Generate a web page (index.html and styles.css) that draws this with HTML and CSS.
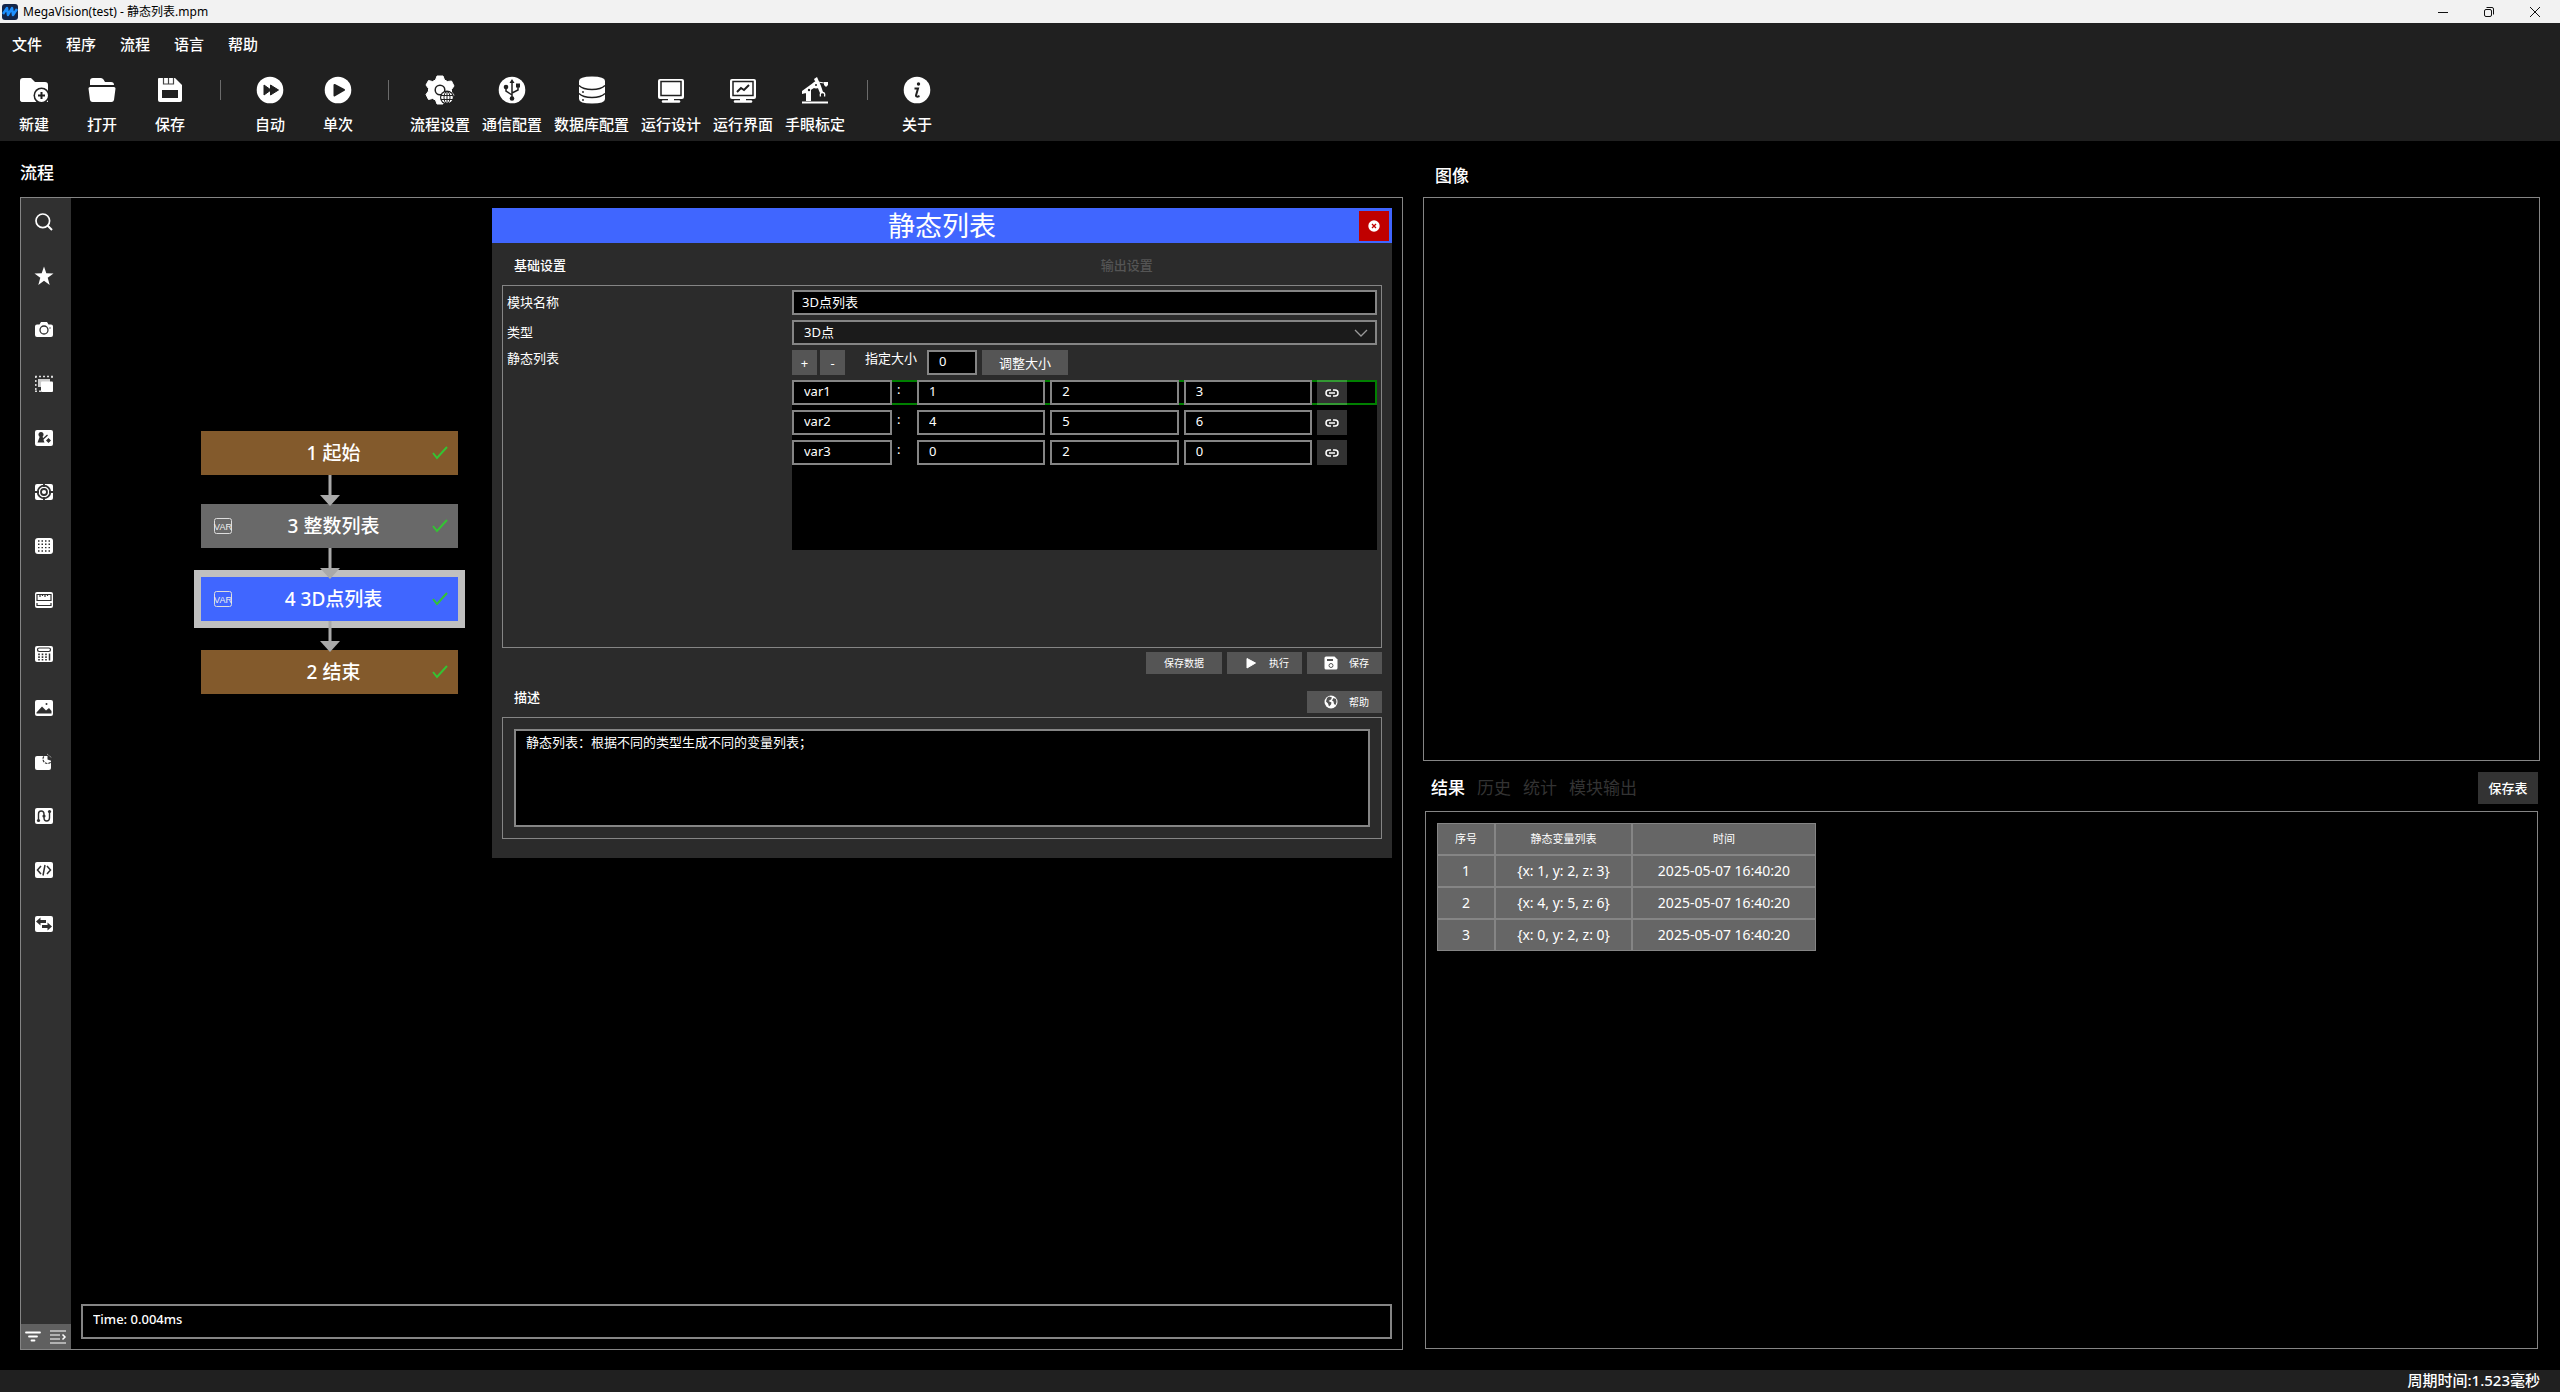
FILE: index.html
```html
<!DOCTYPE html>
<html lang="zh-CN">
  <head>
    <meta charset="utf-8">
    <meta name="viewport" content="width=device-width, initial-scale=1">
    <title>MegaVision(test) - 静态列表.mpm</title>
    <link rel="stylesheet" href="styles.css">
  </head>
  <body>
    <div class="titlebar">
      <svg class="applogo" viewBox="0 0 16 16"><rect width="16" height="16" rx="3" fill="#14264a"/><path d="M1 10l4-6 1 7 4-7 1 7 4-6" fill="none" stroke="#1e90ff" stroke-width="2.500" stroke-linejoin="round"/></svg>
      <span class="apptitle">MegaVision(test) - 静态列表.mpm</span>
      <button class="winbtn" aria-label="最小化"><svg viewBox="0 0 10 10"><path d="M0 5.500h10" stroke="#111"/></svg></button>
      <button class="winbtn" aria-label="还原"><svg viewBox="0 0 10 10" fill="none" stroke="#111"><rect class="hollow" x=".5" y="2.500" width="7" height="7" rx="1.500"/><path class="hollow" d="M2.500.500H8A1.500 1.500 0 0 1 9.500 2v5.500"/></svg></button>
      <button class="winbtn" aria-label="关闭"><svg viewBox="0 0 10 10"><path d="M0 0l10 10M10 0L0 10" stroke="#111"/></svg></button>
    </div>

    <header>
      <nav class="menu">
        <a href="#">文件</a>
        <a href="#">程序</a>
        <a href="#">流程</a>
        <a href="#">语言</a>
        <a href="#">帮助</a>
      </nav>
      <div class="toolbar">
        <button class="tool">
          <svg viewBox="0 0 28 28"><path d="M3 2h8l4 4h10q3 0 3 3v9H3v8q-3 0-3-3V5q0-3 3-3z"/><path d="M0 16h28v10H3q-3 0-3-3z"/><circle cx="21.500" cy="19.500" r="8" fill="#202020"/><circle cx="21.500" cy="19.500" r="6.500"/><path d="M21.500 16v7M18 19.500h7" stroke="#202020" stroke-width="2"/></svg>
          新建
        </button>
        <button class="tool">
          <svg viewBox="0 0 28 28"><path d="M2 9V5q0-3 3-3h8q1.500 0 2.500 1.500L17 6h6q3 0 3 3zM2 11h24q1.500 0 1.500 1.500L26 24q-.5 2-2.500 2h-19Q2.500 26 2 24L.500 12.500Q.500 11 2 11z"/></svg>
          打开
        </button>
        <button class="tool">
          <svg viewBox="0 0 28 28"><path d="M3 2h16l7 7v15q0 2-2 2H4q-2 0-2-2V3q0-1 1-1z"/><path d="M7.500 2v6h10V2M12.500 2v6" fill="none" stroke="#444" stroke-width="1.200"/><path d="M6 14h16v8H6z" fill="#202020"/></svg>
          保存
        </button>
        <span class="sep"></span>
        <button class="tool">
          <svg viewBox="0 0 28 28"><circle cx="14" cy="14" r="13.300"/><path d="M8 9l7 5-7 5zM14.500 9l8 5-8 5z" fill="#202020" stroke="#202020" stroke-linejoin="round"/></svg>
          自动
        </button>
        <button class="tool">
          <svg viewBox="0 0 28 28"><circle cx="14" cy="14" r="13.300"/><path d="M10.500 9l9.500 5-9.500 5.500z" fill="#202020" stroke="#202020" stroke-width="2" stroke-linejoin="round"/></svg>
          单次
        </button>
        <span class="sep"></span>
        <button class="tool">
          <svg viewBox="0 0 28 28"><path d="M11 0h6l1.500 4 3 1.500 4-.5 2.500 5-2.500 3.500V16l2.500 3-3 5-4-1-3 1.500L17 28h-6l-1.500-4-3-1.500-4 1L0 18.500 2.500 15v-2.500L0 9l2.500-4.500 4 1L9.500 4z" stroke="#fff" stroke-linejoin="round"/><circle cx="14" cy="14" r="4.800" fill="none" stroke="#202020" stroke-width="1.500"/><circle cx="21" cy="21.500" r="7" fill="#202020"/><circle cx="21" cy="21.500" r="5.800"/><path d="M21 15v13M15 19.500h12M15 23.500h12" stroke="#202020"/><ellipse cx="21" cy="21.500" rx="3" ry="6" fill="none" stroke="#202020"/></svg>
          流程设置
        </button>
        <button class="tool">
          <svg viewBox="0 0 28 28"><circle cx="14" cy="14" r="13.300"/><g fill="none" stroke="#202020" stroke-width="1.500"><path d="M14 23V5M14 19l-6-4v-4M14 17l6-3v-4"/></g><g fill="#202020"><path d="M11.500 7L14 3l2.500 4zM18 7.500h4v4h-4z"/><circle cx="8" cy="11" r="2.300"/><circle cx="14" cy="22.500" r="2.300"/></g></svg>
          通信配置
        </button>
        <button class="tool">
          <svg viewBox="0 0 28 28"><path d="M1 5q0-4.500 13-4.500T27 5v18q0 4.500-13 4.500T1 23z"/><path d="M1 9.500q4 4 13 4t13-4M1 17.500q4 4 13 4t13-4" fill="none" stroke="#202020" stroke-width="1.500"/><circle cx="5" cy="16" r=".9" fill="#202020"/><circle cx="5" cy="24" r=".9" fill="#202020"/></svg>
          数据库配置
        </button>
        <button class="tool">
          <svg viewBox="0 0 28 28"><rect x="1" y="3" width="26" height="20" rx="2"/><rect x="4" y="5.500" width="20" height="14" stroke="#202020" stroke-width="1.500"/><path d="M6 25.500h16" stroke="#fff" stroke-width="2.500" stroke-linecap="round"/><path d="M11 22h6v4h-6z"/></svg>
          运行设计
        </button>
        <button class="tool">
          <svg viewBox="0 0 28 28"><rect x="1" y="3" width="26" height="20" rx="2"/><rect x="4" y="5.500" width="20" height="14" stroke="#202020" stroke-width="1.500"/><path d="M8 16l4-4 3 2 5-5" fill="none" stroke="#202020" stroke-width="2"/><path d="M6 25.500h16" stroke="#fff" stroke-width="2.500" stroke-linecap="round"/><path d="M11 22h6v4h-6z"/></svg>
          运行界面
        </button>
        <button class="tool">
          <svg viewBox="0 0 28 28"><path d="M1 26.500h26" stroke="#fff" stroke-width="2"/><path d="M5 25V13h5v12zM1 15l11-8 4 2-3 3-8 5-4 1z"/><circle cx="15" cy="9" r="3.500"/><path d="M13 3l3-2 4 9 2 6-3 1z"/><path d="M19.500 20.500q-1-4 2-4t2 4" fill="none" stroke="#fff" stroke-width="1.300"/><path d="M17 6l6 1" stroke="#fff"/><path d="M23 6h4v3l-2 2-2-2z"/><circle cx="8" cy="14" r="1.200" fill="#202020"/><circle cx="15" cy="9" r="1" fill="#202020"/></svg>
          手眼标定
        </button>
        <span class="sep"></span>
        <button class="tool">
          <svg viewBox="0 0 28 28"><circle cx="14" cy="14" r="13.300"/><circle cx="15.500" cy="8" r="1.700" fill="#202020"/><path d="M11.500 12.500h3.500l-2 7q0 2 3.500.5" fill="none" stroke="#202020" stroke-width="2"/></svg>
          关于
        </button>
      </div>
    </header>

    <main>
      <section class="flow">
        <h2 class="caption">流程</h2>
        <div class="flowbox">
          <aside>
            <div class="palette">
              <button aria-label="搜索"><svg viewBox="0 0 18 18"><circle cx="7.800" cy="7.800" r="6.800" fill="none" stroke="#fff" stroke-width="1.700"/><path d="M12.500 12.500l4.500 4.500" stroke="#fff" stroke-width="2"/></svg></button>
              <button aria-label="收藏"><svg viewBox="0 0 18 18"><path d="M9-.5l2.300 6.800 7.200.2-5.800 4.200 2 7.300L9 13.700 3.300 18l2-7.300-5.800-4.200 7.200-.2z"/></svg></button>
              <button aria-label="相机"><svg viewBox="0 0 18 18"><path d="M6 1h6l1.500 2.500H16q2 0 2 2V14q0 2-2 2H2q-2 0-2-2V5.500q0-2 2-2h2.500z"/><circle cx="9" cy="9" r="4" fill="none" stroke="#303030" stroke-width="1.300"/><circle cx="15" cy="7" r=".7" fill="#303030"/></svg></button>
              <button aria-label="区域"><svg viewBox="0 0 18 18"><path d="M0 1.500h18M.8 1v15M0 16.200h6M17 1v4" fill="none" stroke="#ddd" stroke-width="1.500" stroke-dasharray="2 2"/><path d="M3 4h12v8H3z" fill="#ccc"/><rect x="6" y="6.500" width="12" height="10.500" rx="1"/></svg></button>
              <button aria-label="定位"><svg viewBox="0 0 18 18"><rect y="1" width="18" height="16" rx="2"/><g fill="#303030"><circle cx="6" cy="5.500" r="2.500"/><path d="M5 7h2l2.500 6.500H2.500zM13.500 9l2.500 2.500-2.500 2.500-2.500-2.500z"/></g><path d="M7 11l5.500-5M6 6l2 5" stroke="#303030" stroke-width="1.300"/></svg></button>
              <button aria-label="标定"><svg viewBox="0 0 18 18"><rect y="1" width="18" height="16" rx="2"/><g fill="none" stroke="#303030" stroke-width="1.800"><circle cx="9" cy="9" r="6.300"/><circle cx="9" cy="9" r="3"/><path d="M9 1v3M9 14v3M0 9h4M14 9h4"/></g></svg></button>
              <button aria-label="点阵"><svg viewBox="0 0 18 18"><rect y="1" width="18" height="16" rx="3"/><path d="M3 4h12M3 7.300h12M3 10.600h12M3 14h12" stroke="#303030" stroke-width="1.400" stroke-dasharray="1.500 2"/></svg></button>
              <button aria-label="测量"><svg viewBox="0 0 18 18"><rect y="1" width="18" height="16" rx="2"/><path d="M2 3.500h14v6H2zM2 12v2.500h14V12M5 3v3M7.500 3v2M10 3v3M12.500 3v2" fill="none" stroke="#303030" stroke-width="1.200"/></svg></button>
              <button aria-label="计算"><svg viewBox="0 0 18 18"><rect y="1" width="18" height="16" rx="2"/><rect x="2.500" y="3" width="13" height="3.500" rx="1.700" fill="none" stroke="#303030" stroke-width="1.200"/><path d="M4 8.500v7M7.500 8.500v7M11 8.500v7" stroke="#303030" stroke-width="1.600" stroke-dasharray="1.800 1"/><path d="M14.500 8.500v7" stroke="#303030" stroke-width="1.500"/></svg></button>
              <button aria-label="图像"><svg viewBox="0 0 18 18"><rect y="1" width="18" height="16" rx="2"/><path d="M1.500 13.500L7 7.500l4 4 3-2.500 2.500 3v2.500h-15z" fill="#303030"/><circle cx="11.500" cy="5" r="1" fill="#303030"/></svg></button>
              <button aria-label="图形"><svg viewBox="0 0 18 18"><rect y="3" width="16" height="14" rx="2"/><path d="M12.500 6.500V1.500A5 5 0 0 1 17 8z" fill="#303030"/><circle cx="12.500" cy="6" r="4.500" fill="none" stroke="#303030" stroke-width="1.200" stroke-dasharray="2.500 1"/><path d="M12 1l5 4" stroke="#999" stroke-dasharray="2 1"/></svg></button>
              <button aria-label="路径"><svg viewBox="0 0 18 18"><rect y="1" width="18" height="16" rx="2"/><path d="M3.500 13V7q0-3 2.700-3T9 7v4q0 3 2.700 3t2.800-3V5" fill="none" stroke="#303030" stroke-width="1.400"/><g fill="#303030"><circle cx="3.500" cy="13.500" r="1.600"/><circle cx="9" cy="9" r="1.600"/><circle cx="14.500" cy="4.500" r="1.600"/></g></svg></button>
              <button aria-label="脚本"><svg viewBox="0 0 18 18"><rect y="1" width="18" height="16" rx="2"/><path d="M6 5L2.500 9 6 13M12 5l3.500 4-3.500 4M10 4L8 14.500" fill="none" stroke="#303030" stroke-width="1.500"/></svg></button>
              <button aria-label="通信"><svg viewBox="0 0 18 18"><rect y="1" width="18" height="16" rx="2"/><path d="M1 6.500L5.500 2.500V5H11v3H5.500v2.500zM17 11.500l-4.500-4V10H7v3h5.500v2.500z" fill="#303030"/></svg></button>
            </div>
            <div class="palettefoot">
              <button aria-label="筛选"><svg viewBox="0 0 16 14"><path d="M1 2.500h14M4 6.500h8M6.500 10.500h3" stroke="#fff" stroke-width="1.800" stroke-linecap="round"/></svg></button>
              <button aria-label="展开"><svg viewBox="0 0 16 14"><path d="M0 1h16M0 5h10M0 9h10M0 13h16" stroke="#ccc" stroke-width="1.500"/><path d="M12.500 4.500L15 7l-2.500 2.500" fill="none" stroke="#fff" stroke-width="1.500"/></svg></button>
            </div>
          </aside>

          <div class="canvas">
            <div class="graph">
              <div class="node edge">
                <span>1 起始</span>
                <svg class="check" viewBox="0 0 16 14"><path d="M1 7l4 5L15 1"/></svg>
              </div>
              <div class="node linked">
                <svg class="var" viewBox="0 0 18 16"><rect x=".5" y=".5" width="17" height="15" rx="2"/><text x="9" y="12">VAR</text></svg>
                <span>3 整数列表</span>
                <svg class="check" viewBox="0 0 16 14"><path d="M1 7l4 5L15 1"/></svg>
              </div>
              <div class="node linked selected">
                <svg class="var" viewBox="0 0 18 16"><rect x=".5" y=".5" width="17" height="15" rx="2"/><text x="9" y="12">VAR</text></svg>
                <span>4 3D点列表</span>
                <svg class="check" viewBox="0 0 16 14"><path d="M1 7l4 5L15 1"/></svg>
              </div>
              <div class="node edge linked">
                <span>2 结束</span>
                <svg class="check" viewBox="0 0 16 14"><path d="M1 7l4 5L15 1"/></svg>
              </div>
            </div>

            <div class="dialog" role="dialog" aria-label="静态列表">
              <div class="dialoghead">
                <h1>静态列表</h1>
                <button class="close" aria-label="关闭"><svg viewBox="0 0 12 12"><circle cx="6" cy="6" r="5.700" fill="#fff"/><path d="M4 4l4 4M8 4L4 8" stroke="#c00000" stroke-width="1.300"/></svg></button>
              </div>
              <div class="dialogtabs">
                <button class="active">基础设置</button>
                <button>输出设置</button>
              </div>
              <div class="form">
                <label for="name">模块名称</label>
                <input id="name" type="text" value="3D点列表">
                <label for="type">类型</label>
                <div class="selectwrap">
                  <select id="type"><option>3D点</option></select>
                  <svg viewBox="0 0 12 8"><path d="M0 1l6 6 6-6" fill="none" stroke="#999" stroke-width="1.300"/></svg>
                </div>
                <span class="listlabel">静态列表</span>
                <div class="listedit">
                  <div class="listtools">
                    <button class="btn square">+</button>
                    <button class="btn square">-</button>
                    <label for="size">指定大小</label>
                    <input id="size" type="text" value="0">
                    <button class="btn">调整大小</button>
                  </div>
                  <div class="list">
                    <div class="row current">
                      <input class="key" type="text" value="var1" aria-label="名称">
                      <span>:</span>
                      <input type="text" value="1" aria-label="x">
                      <input type="text" value="2" aria-label="y">
                      <input type="text" value="3" aria-label="z">
                      <button class="link" aria-label="链接"><svg viewBox="0 0 14 8"><path d="M6 1H4a3 3 0 0 0 0 6h2M8 1h2a3 3 0 0 1 0 6H8M4 4h6"/></svg></button>
                    </div>
                    <div class="row">
                      <input class="key" type="text" value="var2" aria-label="名称">
                      <span>:</span>
                      <input type="text" value="4" aria-label="x">
                      <input type="text" value="5" aria-label="y">
                      <input type="text" value="6" aria-label="z">
                      <button class="link" aria-label="链接"><svg viewBox="0 0 14 8"><path d="M6 1H4a3 3 0 0 0 0 6h2M8 1h2a3 3 0 0 1 0 6H8M4 4h6"/></svg></button>
                    </div>
                    <div class="row">
                      <input class="key" type="text" value="var3" aria-label="名称">
                      <span>:</span>
                      <input type="text" value="0" aria-label="x">
                      <input type="text" value="2" aria-label="y">
                      <input type="text" value="0" aria-label="z">
                      <button class="link" aria-label="链接"><svg viewBox="0 0 14 8"><path d="M6 1H4a3 3 0 0 0 0 6h2M8 1h2a3 3 0 0 1 0 6H8M4 4h6"/></svg></button>
                    </div>
                  </div>
                </div>
              </div>
              <div class="actions">
                <button class="btn small">保存数据</button>
                <button class="btn small"><svg viewBox="0 0 14 14"><path d="M3 2.500l8.500 4.500L3 12z" stroke="#fff" stroke-linejoin="round"/></svg>执行</button>
                <button class="btn small"><svg viewBox="0 0 14 14"><path d="M2 .5h8.500l3 3V12q0 1.500-1.500 1.500H2Q.500 13.500.500 12V2Q.500.500 2 .5z"/><path d="M3 4h6" stroke="#555" stroke-width="2"/><circle cx="7" cy="9.500" r="2" fill="none" stroke="#555"/></svg>保存</button>
              </div>
              <div class="deschead">
                <label for="desc">描述</label>
                <button class="btn small"><svg viewBox="0 0 14 14"><circle cx="7" cy="7" r="6.500"/><path d="M5 1.500l3 1-1 2-2.500 1.500 3 1.500-.5 2-2 2-1-3-2-2 1-3.500zM9.500 3l2.500 1 .5 3-1 3-1.500-1-.5-2.500-1.500-1z" fill="#555"/></svg>帮助</button>
              </div>
              <div class="descbox">
                <textarea id="desc">静态列表：根据不同的类型生成不同的变量列表；</textarea>
              </div>
            </div>

            <input class="log" type="text" value="Time: 0.004ms" aria-label="日志">
          </div>
        </div>
      </section>

      <section class="side">
        <h2 class="caption">图像</h2>
        <div class="imagebox"></div>
        <div class="resulthead">
          <nav class="tabs">
            <a href="#" class="active">结果</a>
            <a href="#">历史</a>
            <a href="#">统计</a>
            <a href="#">模块输出</a>
          </nav>
          <button class="savetable">保存表</button>
        </div>
        <div class="resultbox">
          <table>
            <thead>
              <tr><th class="index">序号</th><th class="vars">静态变量列表</th><th class="time">时间</th></tr>
            </thead>
            <tbody>
              <tr><td>1</td><td>{x: 1, y: 2, z: 3}</td><td>2025-05-07 16:40:20</td></tr>
              <tr><td>2</td><td>{x: 4, y: 5, z: 6}</td><td>2025-05-07 16:40:20</td></tr>
              <tr><td>3</td><td>{x: 0, y: 2, z: 0}</td><td>2025-05-07 16:40:20</td></tr>
            </tbody>
          </table>
        </div>
      </section>
    </main>

    <footer>周期时间:1.523毫秒</footer>
  </body>
</html>
```
FILE: styles.css
```css
* {
  box-sizing: border-box;
}
html, body {
  margin: 0;
  padding: 0;
}
body {
  display: flex;
  flex-direction: column;
  min-height: 100vh;
  background: #000;
  color: #fff;
  font-family: "Noto Sans", "Noto Sans CJK SC", sans-serif;
  font-size: 13px;
  line-height: 20px;
}
button, input, select, textarea {
  margin: 0;
  border: 0;
  border-radius: 0;
  padding: 0;
  color: inherit;
  font: inherit;
}
button {
  background: none;
}
a {
  color: inherit;
  text-decoration: none;
}
svg {
  display: block;
  overflow: visible;
  fill: #fff;
}
h1, h2 {
  margin: 0;
}

/* window title */
.titlebar {
  display: flex;
  align-items: center;
  height: 23px;
  padding: 0 2px;
  background: #f2f2f2;
  color: #000;
  font-size: 12px;
}
.applogo {
  width: 16px;
  height: 16px;
}
.apptitle {
  flex: 1;
  padding-left: 5px;
}
.winbtn {
  width: 46px;
  height: 20px;
}
.winbtn svg {
  width: 10px;
  height: 10px;
  margin: 0 auto;
}
.hollow {
  fill: none;
}

/* menu and toolbar */
header {
  height: 118px;
  background: #202020;
  font-size: 15px;
  font-weight: 500;
}
.menu {
  display: flex;
  gap: 24px;
  padding: 11px 12px 0;
}
.toolbar {
  display: flex;
  gap: 12px;
  padding: 22px 6px 0;
}
.tool {
  display: flex;
  flex-direction: column;
  align-items: center;
  gap: 10px;
  min-width: 56px;
}
.tool svg {
  width: 28px;
  height: 28px;
}
.sep {
  width: 1px;
  height: 20px;
  margin: 4px 9px 0 10px;
  background: #6b6b6b;
}

/* work area */
main {
  display: grid;
  grid-template-columns: 1383fr 1117fr;
  gap: 20px;
  flex: 1;
  padding: 0 20px;
}
.caption {
  height: 56px;
  padding-top: 22px;
  font-size: 17px;
  font-weight: 500;
}
.flow {
  display: flex;
  flex-direction: column;
  padding-bottom: 20px;
}
.flowbox {
  display: flex;
  flex: 1;
  border: 1px solid #858585;
}
aside {
  display: flex;
  flex-direction: column;
  justify-content: space-between;
  width: 50px;
  background: #303030;
}
.palette {
  display: flex;
  flex-direction: column;
  gap: 36px;
  padding: 15px 0 0 14px;
}
.palette svg {
  width: 18px;
  height: 18px;
}
.palettefoot {
  display: flex;
  gap: 9px;
  align-items: center;
  height: 25px;
  padding-left: 4px;
  background: #606060;
}
.palettefoot svg {
  width: 16px;
  height: 14px;
}
.canvas {
  position: relative;
  display: flex;
  flex-direction: column;
  justify-content: space-between;
  flex: 1;
  padding: 233px 10px 10px;
}

/* flow nodes */
.graph {
  display: flex;
  flex-direction: column;
  gap: 29px;
  width: 257px;
  margin-left: 120px;
}
.node {
  position: relative;
  display: grid;
  grid-template-columns: 18px 1fr 16px;
  align-items: center;
  height: 44px;
  padding: 0 10px 0 13px;
  background: #696969;
  font-size: 19px;
  font-weight: 500;
  text-align: center;
}
.node span {
  grid-column: 2;
  padding-left: 3px;
}
.node.edge {
  background: #835a2c;
}
.node.selected {
  background: #4066ff;
  box-shadow: 0 0 0 7px #c0c0c0;
}
.node.linked::before,
.node.linked::after {
  content: "";
  position: absolute;
  left: 50%;
  transform: translateX(-50%);
}
.node.linked::before {
  top: -29px;
  width: 3px;
  height: 22px;
  background: #a9a9a9;
}
.node.linked::after {
  top: -9px;
  border: 10px solid transparent;
  border-top: 11px solid #a9a9a9;
  border-bottom: 0;
}
.var {
  width: 18px;
  height: 16px;
}
.var rect {
  fill: none;
  stroke: #ddd;
}
.var text {
  fill: #eee;
  font-family: "Liberation Sans Narrow", "Liberation Sans", sans-serif;
  font-size: 9px;
  font-weight: 400;
  text-anchor: middle;
}
.check {
  grid-column: 3;
  width: 16px;
  height: 14px;
  fill: none;
  stroke: #33c433;
  stroke-width: 2;
}

/* module dialog */
.dialog {
  position: absolute;
  top: 10px;
  right: 10px;
  width: 900px;
  padding-bottom: 19px;
  background: #2b2b2b;
}
.dialoghead {
  display: grid;
  grid-template-columns: 30px 1fr 30px;
  align-items: center;
  height: 35px;
  padding: 0 3px;
  background: #4066ff;
}
.dialoghead h1 {
  grid-column: 2;
  font-size: 27px;
  font-weight: 400;
  text-align: center;
}
.close {
  height: 30px;
  background: #c00000;
}
.close svg {
  width: 12px;
  height: 12px;
  margin: 0 auto;
}
.dialogtabs {
  display: grid;
  grid-template-columns: 2fr 1fr;
  height: 42px;
  padding: 0 10px;
}
.dialogtabs button {
  padding: 2px 12px 0;
  color: #555;
  font-weight: 500;
  text-align: left;
}
.dialogtabs .active {
  color: #fff;
}
.form {
  display: grid;
  grid-template-columns: 19fr 39fr;
  grid-template-rows: 25px 25px auto;
  gap: 5px 0;
  min-height: 363px;
  margin: 0 10px;
  border: 1px solid #858585;
  padding: 4px;
}
.form label {
  line-height: 25px;
}
.listlabel {
  line-height: 16px;
}
.dialog input,
.dialog select {
  width: 100%;
  height: 25px;
  border: 2px solid #858585;
  padding: 0 10px 4px;
  background: #000;
}
.dialog input#name {
  padding: 0 8px 2px;
}
.selectwrap {
  position: relative;
}
.dialog select {
  padding-bottom: 2px;
  background: #1b1b1b;
  appearance: none;
}
.selectwrap svg {
  position: absolute;
  top: 9px;
  right: 10px;
  width: 12px;
  height: 8px;
}
.btn {
  height: 25px;
  padding: 0 17px;
  background: #555;
}
.listtools {
  display: flex;
  gap: 5px;
  height: 30px;
}
.listtools .square {
  width: 25px;
  padding: 0;
}
.listtools .square + .square {
  margin-left: -2px;
}
.listtools label {
  padding: 0 5px 0 15px;
  line-height: 16px;
}
.listtools #size {
  width: 50px;
}
.list {
  display: flex;
  flex-direction: column;
  gap: 5px;
  height: 170px;
  background: #000;
}
.row {
  display: grid;
  grid-template-columns: 100px 15px 1fr 1fr 1fr 30px;
  gap: 5px;
  height: 25px;
  padding-right: 30px;
  line-height: 18px;
}
.row.current {
  box-shadow: inset 0 0 0 2px #008000;
}
.link {
  background: rgba(255, 255, 255, 0.2);
}
.link svg {
  width: 14px;
  height: 8px;
  margin: 0 auto;
  fill: none;
  stroke: #fff;
  stroke-width: 1.5;
}
.actions {
  display: flex;
  justify-content: flex-end;
  gap: 5px;
  padding: 4px 10px 0;
}
.btn.small {
  display: flex;
  align-items: center;
  gap: 11px;
  height: 22px;
  padding: 0 13px 0 17px;
  font-size: 10px;
}
.btn.small:first-child {
  padding: 0 18px;
}
.btn.small svg {
  width: 14px;
  height: 14px;
}
.deschead {
  display: flex;
  justify-content: space-between;
  height: 43px;
  padding: 17px 10px 0 22px;
  font-weight: 500;
}
.deschead label {
  line-height: 12px;
}
.deschead .btn {
  font-weight: 400;
}
.descbox {
  margin: 0 10px;
  border: 1px solid #858585;
  padding: 11px;
}
.descbox textarea {
  display: block;
  width: 100%;
  height: 98px;
  border: 2px solid #858585;
  padding: 1px 10px;
  background: #000;
  resize: none;
}
.log {
  width: 100%;
  height: 35px;
  border: 2px solid #858585;
  padding: 0 10px 6px;
  background: #000;
  font-weight: 500;
}

/* image and results */
.side {
  display: grid;
  grid-template-rows: 56px 564fr 50px 538fr;
  padding-bottom: 21px;
}
.side .caption {
  padding: 25px 12px 0;
}
.imagebox {
  border: 1px solid #858585;
}
.resulthead {
  display: flex;
  align-items: center;
  justify-content: space-between;
  padding: 4px 0 0 8px;
}
.tabs {
  display: flex;
  gap: 12px;
  color: #333;
  font-size: 17px;
}
.tabs .active {
  color: #fff;
  font-weight: 500;
}
.savetable {
  width: 60px;
  height: 32px;
  margin-right: 2px;
  background: #333;
  font-weight: 500;
}
.resultbox {
  margin: 0 2px;
  border: 1px solid #858585;
  padding: 11px;
}
table {
  border-collapse: separate;
  border-spacing: 0;
  background: #666;
  text-align: center;
}
th, td {
  height: 32px;
  border: 1px solid #858585;
  padding: 0;
  font-size: 14px;
}
th {
  font-size: 11px;
  font-weight: 400;
}
.index {
  width: 58px;
}
.vars {
  width: 137px;
}
.time {
  width: 184px;
}

footer {
  height: 22px;
  padding: 0 20px;
  background: #202020;
  font-size: 15px;
  font-weight: 500;
  text-align: right;
}
```
